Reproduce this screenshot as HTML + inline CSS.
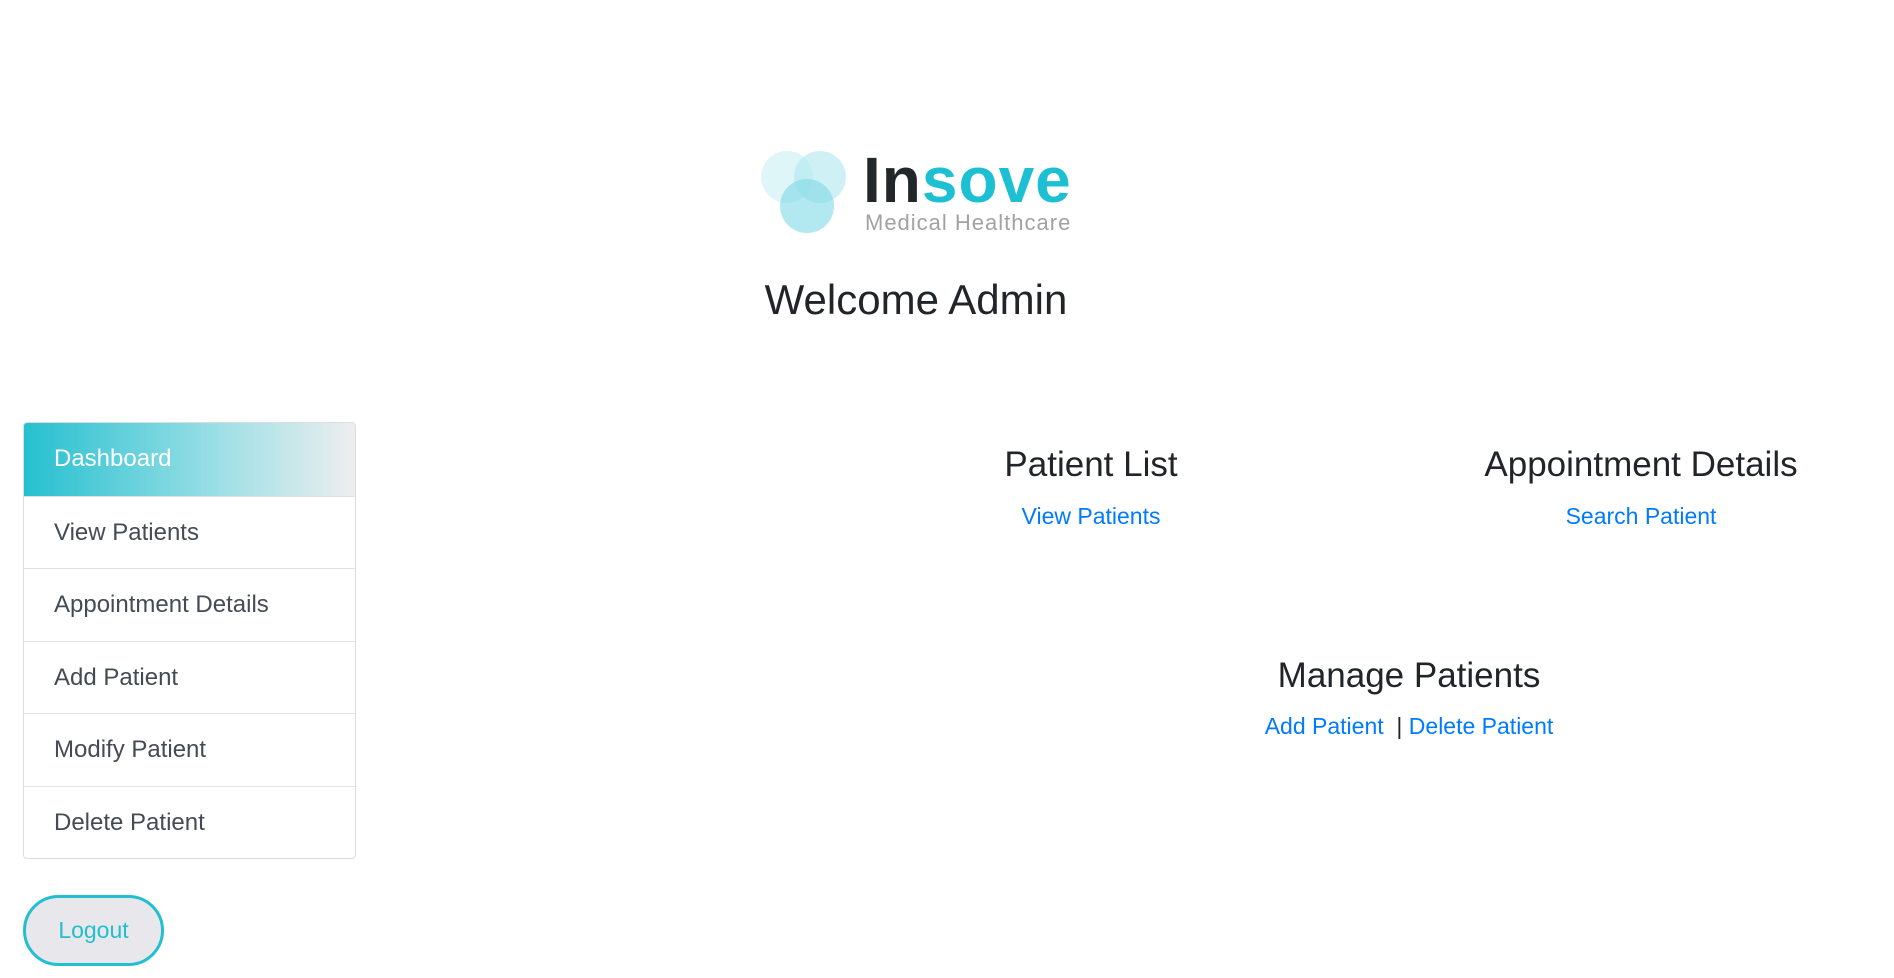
<!DOCTYPE html>
<html><head><meta charset="utf-8"><style>
*{margin:0;padding:0;box-sizing:border-box}
body{width:1894px;height:978px;background:#fff;font-family:"Liberation Sans",sans-serif;position:relative;overflow:hidden;color:#212529}
.abs{position:absolute}
.c{text-align:center;transform:translateX(-50%);white-space:nowrap}
a{color:#007bff;text-decoration:none}
.side{left:23px;top:422px;width:333px;border:1px solid #ddd;border-radius:4px;overflow:hidden}
.side div{height:72.5px;line-height:72px;padding-left:30px;font-size:24px;color:#444b55;border-top:1px solid #e2e2e2}
.side div:first-child{border-top:none;color:#fff;background:linear-gradient(90deg,#25c0d0,#9fe0e6 60%,#eeeeee)}
h2{font-weight:400;font-size:35px}
.l{font-size:23px}
</style></head><body>
<svg class="abs" style="left:760px;top:148px" width="95" height="90">
<circle cx="27" cy="29" r="26" fill="#bfeef3" opacity=".5"/>
<circle cx="60" cy="29" r="26" fill="#a8e6ee" opacity=".55"/>
<circle cx="47" cy="58" r="27" fill="#7fd9e6" opacity=".6"/>
</svg>
<div class="abs" style="left:863px;top:148px;font-size:64px;font-weight:700;letter-spacing:1px;line-height:1"><span style="color:#222829">In</span><span style="color:#1dbfd2">sove</span></div>
<div class="abs" style="left:865px;top:210px;font-size:22px;letter-spacing:1px;color:#a2a2a2">Medical Healthcare</div>
<div class="abs c" style="left:916px;top:276px;font-size:42px;color:#212529">Welcome Admin</div>
<div class="abs side"><div>Dashboard</div><div>View Patients</div><div>Appointment Details</div><div>Add Patient</div><div>Modify Patient</div><div>Delete Patient</div></div>
<div class="abs" style="left:23px;top:895px;width:141px;height:71px;border:3px solid #22bfd0;border-radius:36px;background:#e8e8ec;color:#22bfd0;font-size:23px;text-align:center;line-height:64px">Logout</div>
<h2 class="abs c" style="left:1091px;top:445px">Patient List</h2>
<a class="abs c l" style="left:1091px;top:503px">View Patients</a>
<h2 class="abs c" style="left:1641px;top:445px">Appointment Details</h2>
<a class="abs c l" style="left:1641px;top:503px">Search Patient</a>
<h2 class="abs c" style="left:1409px;top:656px">Manage Patients</h2>
<div class="abs c l" style="left:1409px;top:713px"><a>Add Patient</a> &nbsp;|&nbsp;<a>Delete Patient</a></div>
</body></html>
